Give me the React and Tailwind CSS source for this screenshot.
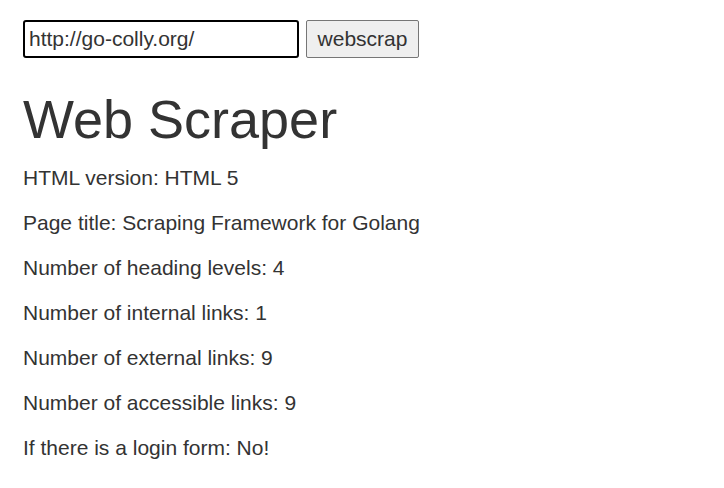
export default function App() {
  const stats = [
    "HTML version: HTML 5",
    "Page title: Scraping Framework for Golang",
    "Number of heading levels: 4",
    "Number of internal links: 1",
    "Number of external links: 9",
    "Number of accessible links: 9",
    "If there is a login form: No!",
  ];

  return (
    <div className="min-h-[488px] bg-white pl-[23px] pt-5 text-[#333] font-['Liberation_Sans',Arial,sans-serif]">
      <form className="flex items-center gap-[7px]" onSubmit={(e) => e.preventDefault()}>
        <input
          type="text"
          defaultValue="http://go-colly.org/"
          className="h-[38px] w-[276px] rounded-[3px] border-2 border-black px-[4px] text-[21px] text-[#333] outline-none"
        />
        <button
          type="submit"
          className="h-[38px] w-[113px] rounded-[2px] border border-[#767676] bg-[#efefef] text-[21px] text-[#333]"
        >
          webscrap
        </button>
      </form>

      <h1 className="mt-[30px] text-[54px] leading-[62px] font-normal">Web Scraper</h1>

      <div className="mt-[5px]">
        {stats.map((line, i) => (
          <p key={`stat-${i}`} className="text-[21px] leading-[45px]">
            {line}
          </p>
        ))}
      </div>
    </div>
  );
}
